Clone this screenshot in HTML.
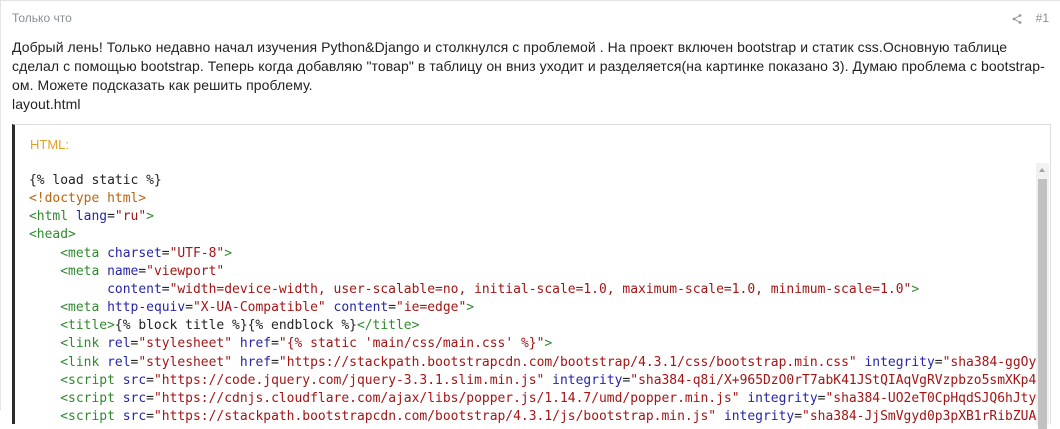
<!DOCTYPE html>
<html><head><meta charset="utf-8"><style>
body{margin:0;width:1060px;height:410px;overflow:hidden;background:#fff;font-family:"Liberation Sans",sans-serif;}
.wrap{position:absolute;left:0;top:0;width:1060px;height:410px;border-top:1px solid #e3e3e3;border-left:1px solid #e3e3e3;box-sizing:border-box}
.time{position:absolute;left:11px;top:10px;font-size:12px;color:#8a8f93}
.num{position:absolute;right:11px;top:10px;font-size:12px;color:#8a8f93}
.share{position:absolute;left:1011px;top:13px}
.txt{position:absolute;left:11px;top:37px;font-size:14px;line-height:19px;color:#222;white-space:nowrap;letter-spacing:0.08px}
.code{position:absolute;left:11px;top:123px;width:1039px;height:300px;border-left:3px solid #2b2b2b;border-top:1px solid #ddd;border-right:1px solid #ddd;box-sizing:border-box;background:#fff}
.lbl{position:absolute;left:15px;top:12px;font-size:13px;color:#e2a128}
.pre{position:absolute;left:14px;top:47px;width:1007px;overflow:hidden;font-family:"DejaVu Sans Mono",monospace;font-size:12.97px;line-height:18.15px;white-space:pre;color:#222}
.t{color:#2f8a2f}.a{color:#2525a8}.s{color:#a31515}.d{color:#b8650e}
.sb{position:absolute;left:1021px;top:38px;width:13px;height:262px;background:#f1f1f1}
.th{position:absolute;left:2px;top:16px;width:9px;height:250px;background:#c1c1c1}
.arr{position:absolute;left:3px;top:5px;width:0;height:0;border-left:3.5px solid transparent;border-right:3.5px solid transparent;border-bottom:4px solid #a3a3a3}
</style></head><body><div class="wrap">
<div class="time">Только что</div>
<svg class="share" width="10" height="10" viewBox="0 0 10 10"><circle cx="8" cy="1.5" r="1.4" fill="#999"/><circle cx="2" cy="5" r="1.4" fill="#999"/><circle cx="8" cy="8.5" r="1.4" fill="#999"/><path d="M8 1.5L2 5L8 8.5" stroke="#999" stroke-width="1" fill="none"/></svg>
<div class="num">#1</div>
<div class="txt">Добрый лень! Только недавно начал изучения Python&amp;Django и столкнулся с проблемой . На проект включен bootstrap и статик css.Основную таблице<br>сделал с помощью bootstrap. Теперь когда добавляю "товар" в таблицу он вниз уходит и разделяется(на картинке показано 3). Думаю проблема с bootstrap-<br>ом. Можете подсказать как решить проблему.<br>layout.html</div>
<div class="code">
<div class="lbl">HTML:</div>
<div class="pre">{% load static %}
<span class="d">&lt;!doctype html&gt;</span>
<span class="t">&lt;html</span> <span class="a">lang</span>=<span class="s">"ru"</span><span class="t">&gt;</span>
<span class="t">&lt;head&gt;</span>
    <span class="t">&lt;meta</span> <span class="a">charset</span>=<span class="s">"UTF-8"</span><span class="t">&gt;</span>
    <span class="t">&lt;meta</span> <span class="a">name</span>=<span class="s">"viewport"</span>
          <span class="a">content</span>=<span class="s">"width=device-width, user-scalable=no, initial-scale=1.0, maximum-scale=1.0, minimum-scale=1.0"</span><span class="t">&gt;</span>
    <span class="t">&lt;meta</span> <span class="a">http-equiv</span>=<span class="s">"X-UA-Compatible"</span> <span class="a">content</span>=<span class="s">"ie=edge"</span><span class="t">&gt;</span>
    <span class="t">&lt;title&gt;</span>{% block title %}{% endblock %}<span class="t">&lt;/title&gt;</span>
    <span class="t">&lt;link</span> <span class="a">rel</span>=<span class="s">"stylesheet"</span> <span class="a">href</span>=<span class="s">"{% static 'main/css/main.css' %}"</span><span class="t">&gt;</span>
    <span class="t">&lt;link</span> <span class="a">rel</span>=<span class="s">"stylesheet"</span> <span class="a">href</span>=<span class="s">"https://stackpath.bootstrapcdn.com/bootstrap/4.3.1/css/bootstrap.min.css"</span> <span class="a">integrity</span>=<span class="s">"sha384-ggOyR0iXCbMQv3Xipma34MD+dH/1fQ784/j6cY/iJTQUOhcWr7x9JvoRxT2MZw1T"</span>
    <span class="t">&lt;script</span> <span class="a">src</span>=<span class="s">"https://code.jquery.com/jquery-3.3.1.slim.min.js"</span> <span class="a">integrity</span>=<span class="s">"sha384-q8i/X+965DzO0rT7abK41JStQIAqVgRVzpbzo5smXKp4YfRvH+8abtTE1Pi6jizo"</span>
    <span class="t">&lt;script</span> <span class="a">src</span>=<span class="s">"https://cdnjs.cloudflare.com/ajax/libs/popper.js/1.14.7/umd/popper.min.js"</span> <span class="a">integrity</span>=<span class="s">"sha384-UO2eT0CpHqdSJQ6hJty5KVphtPhzWj9WO1clHTMGa3JDZwrnQq4sF86dIHNDz0W1"</span>
    <span class="t">&lt;script</span> <span class="a">src</span>=<span class="s">"https://stackpath.bootstrapcdn.com/bootstrap/4.3.1/js/bootstrap.min.js"</span> <span class="a">integrity</span>=<span class="s">"sha384-JjSmVgyd0p3pXB1rRibZUAYoIIy6OrQ6VrjIEaFf/nJGzIxFDsf4x0xIM+B07jRM"</span></div>
<div class="sb"><div class="arr"></div><div class="th"></div></div>
</div>
</div></body></html>
